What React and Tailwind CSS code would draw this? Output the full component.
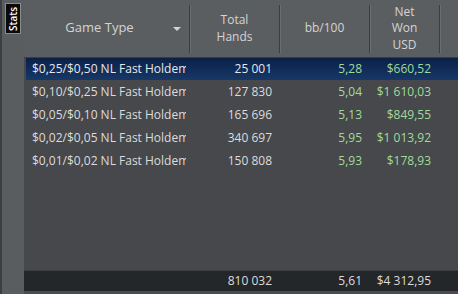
const rows = [
  { game: '$0,25/$0,50 NL Fast Holdem', hands: '25 001', bb: '5,28', won: '$660,52', selected: true },
  { game: '$0,10/$0,25 NL Fast Holdem', hands: '127 830', bb: '5,04', won: '$1 610,03' },
  { game: '$0,05/$0,10 NL Fast Holdem', hands: '165 696', bb: '5,13', won: '$849,55' },
  { game: '$0,02/$0,05 NL Fast Holdem', hands: '340 697', bb: '5,95', won: '$1 013,92' },
  { game: '$0,01/$0,02 NL Fast Holdem', hands: '150 808', bb: '5,93', won: '$178,93' },
];

function Sep() {
  return <div className="h-[48px] w-px shrink-0 self-center bg-[#3b3d40] shadow-[1px_0_0_#6a6d70]" />;
}

function HeadCell({ width, children }) {
  return (
    <div className="flex h-full shrink-0 items-stretch" style={{ width }}>
      <div className="flex flex-1 flex-col items-center justify-center text-center leading-[16.5px]">{children}</div>
      <Sep />
    </div>
  );
}

export default function App() {
  return (
    <div
      className="flex h-[294px] w-[458px] overflow-hidden bg-[#46484b] text-[12px] text-[#dcdcdc]"
      style={{ fontFamily: '"Open Sans", "Noto Sans", sans-serif' }}
    >
      <div className="flex w-[24px] shrink-0 border-l-2 border-[#3c3e40] bg-[#5a5d60] pt-[3px] pl-[3px]">
        <div className="flex h-[31px] w-[16px] items-center justify-center border border-[#8a8c8e] bg-[#0a0a0a]">
          <span className="-rotate-90 whitespace-nowrap text-[10px] font-semibold leading-none text-white">Stats</span>
        </div>
      </div>

      <div className="flex min-w-0 flex-1 flex-col">
        <div className="flex h-[57px] shrink-0 bg-[#5b5e61] text-[#d4d4d4]">
          <div className="flex h-full w-[166px] shrink-0 items-stretch">
            <div className="relative flex flex-1 items-center justify-center pb-[1px] pr-[14px] text-[13px]">
              Game Type
              <svg className="absolute right-[8px] top-[27px]" width="8" height="4" viewBox="0 0 8 4">
                <path d="M0 0h8L4 4z" fill="#d4d4d4" />
              </svg>
            </div>
            <Sep />
          </div>
          <HeadCell width={90}>
            <span>Total</span>
            <span>Hands</span>
          </HeadCell>
          <HeadCell width={90}>
            <span>bb/100</span>
          </HeadCell>
          <HeadCell width={70}>
            <span>Net</span>
            <span>Won</span>
            <span>USD</span>
          </HeadCell>
          <div className="flex-1" />
        </div>

        <div className="h-px bg-[#3a3c3f]" />

        <div className="flex flex-1 flex-col pl-[2px]">
          {rows.map((r) => (
            <div
              key={r.game}
              className={
                r.selected
                  ? 'flex h-[22px] items-center bg-gradient-to-b from-[#0b2048] to-[#173868] text-[#e8e8e8]'
                  : 'flex h-[23px] items-center'
              }
            >
              <div className="w-[164px] shrink-0 pl-[6px]">
                <div className="w-[154px] overflow-hidden whitespace-nowrap">{r.game}</div>
              </div>
              <div className="w-[82px] shrink-0 text-right">{r.hands}</div>
              <div className="w-[90px] shrink-0 text-right text-[#9fdc9a]">{r.bb}</div>
              <div className="w-[69px] shrink-0 text-right text-[#9fdc9a]">{r.won}</div>
            </div>
          ))}
        </div>

        <div className="h-px bg-[#3c3e41]" />
        <div className="flex h-[20px] shrink-0 items-center bg-[#24272a] pl-[2px] text-[#dcdcdc]">
          <div className="w-[164px] shrink-0" />
          <div className="w-[82px] shrink-0 text-right">810 032</div>
          <div className="w-[90px] shrink-0 text-right">5,61</div>
          <div className="w-[69px] shrink-0 text-right">$4 312,95</div>
        </div>
        <div className="h-[3px] shrink-0 bg-[#4a4c4f]" />
      </div>
    </div>
  );
}
